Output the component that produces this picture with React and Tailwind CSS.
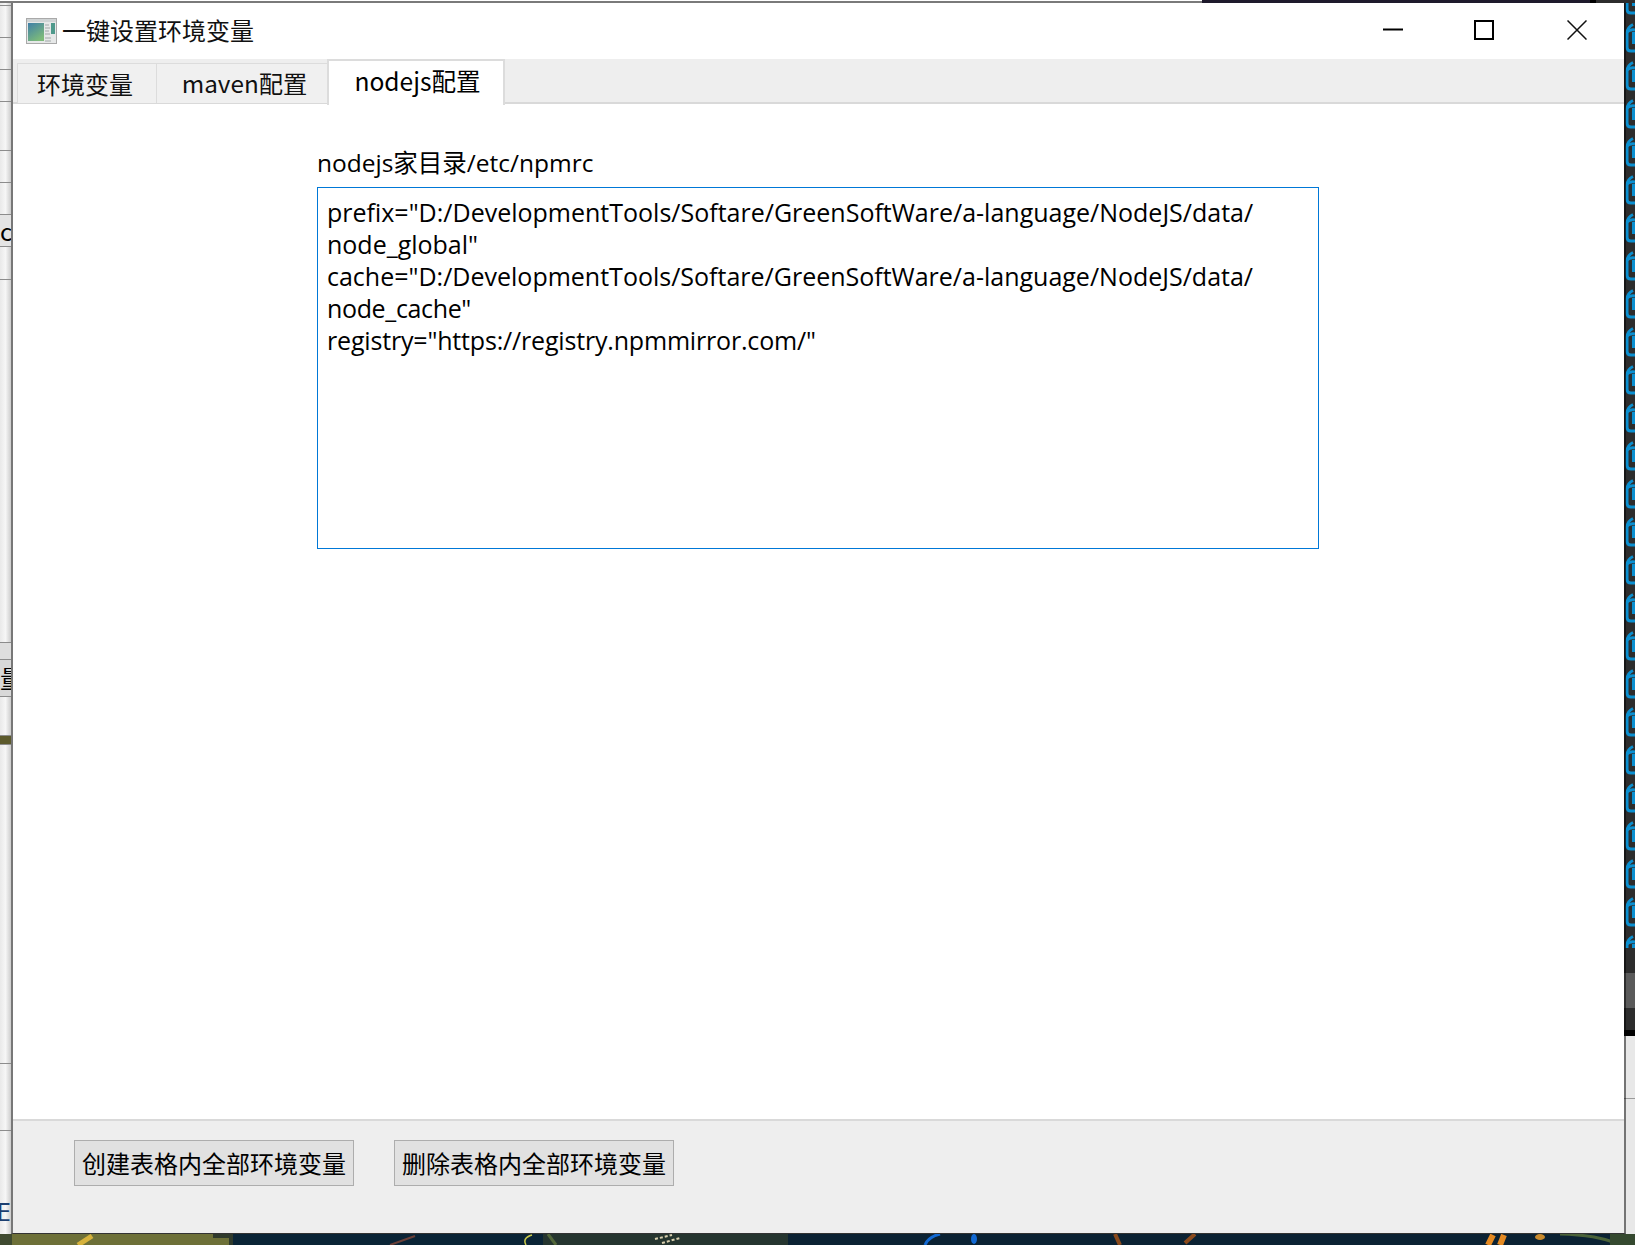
import React from "react";

const cjk = '"Noto Sans CJK SC", sans-serif';
const latin = '"Open Sans", "Noto Sans CJK SC", sans-serif';
const lines = [
  ['prefix="D:/DevelopmentTools/Softare/GreenSoftWare/a-language/NodeJS/data/', ""],
  ['node_global"', ""],
  ['cache="D:/DevelopmentTools/Softare/GreenSoftWare/a-language/NodeJS/data/', ""],
  ['node_cache"', "tracking-[-0.35px]"],
  ['registry="https://registry.npmmirror.com/"', "tracking-[-0.18px]"],
];

// rows of the window peeking out on the left
const leftRows = [
  [3, ""], [32, ""], [32, ""], [32, ""], [49, ""], [32, ""], [32, ""], [32, "bg-[#e4e4e4]", "c"], [33, ""],
  [363, ""], [17, "bg-[#dedede]"], [37, "bg-[#d8d8d8]", "量"], [39, ""], [9, "bg-[#5c5a2c]"], [319, ""], [67, ""],
];

function AppIcon() {
  return (
    <svg width="31" height="26" viewBox="0 0 31 26">
      <defs>
        <linearGradient id="panel" x1="0" y1="0" x2="0.6" y2="1">
          <stop offset="0" stopColor="#3f7fa8" />
          <stop offset="1" stopColor="#7dbb7a" />
        </linearGradient>
      </defs>
      <rect x="0.5" y="0.5" width="30" height="25" fill="#e6e8e8" stroke="#a9a9a9" />
      <rect x="1" y="1" width="29" height="3" fill="#cfd3d4" />
      <rect x="2" y="5" width="16" height="18" fill="url(#panel)" />
      <rect x="25" y="5" width="4" height="11" fill="#4f9a8c" />
      <path d="M19 7h4M19 10h5M19 13h4M19 16h5M19 20h6M19 23h6" stroke="#b9bdbd" strokeWidth="1.5" />
    </svg>
  );
}

function WindowButtons() {
  return (
    <div className="mb-[2px] flex items-center">
      <svg width="20" height="20" viewBox="0 0 20 20" className="mr-[71px]">
        <path d="M0 9.5h20" stroke="#000" strokeWidth="2" />
      </svg>
      <svg width="20" height="20" viewBox="0 0 20 20" className="mr-[73px]">
        <rect x="1" y="1" width="18" height="18" fill="none" stroke="#000" strokeWidth="2" />
      </svg>
      <svg width="20" height="20" viewBox="0 0 20 20">
        <path d="M0.5 0.5l19 19M19.5 0.5l-19 19" stroke="#111" strokeWidth="1.5" />
      </svg>
    </div>
  );
}

function Tab({ label, active, className }) {
  if (active) {
    return (
      <div className={`${className} relative z-10 -mb-[2px] flex h-[46px] items-center justify-center border-x-2 border-t-2 border-[#dcdcdc] bg-white pb-[5px] text-black`}>
        {label}
      </div>
    );
  }
  return (
    <div className={`${className} mt-[4px] flex h-[40px] items-center justify-center border-l border-t border-[#dcdcdc] bg-[#f0f0f0] text-[#111]`}>
      {label}
    </div>
  );
}

function FooterButton({ children }) {
  return (
    <button className="flex h-[46px] w-[280px] items-center justify-center border border-[#adadad] bg-[#e1e1e1] text-[24px] text-black">
      {children}
    </button>
  );
}

function RightGlyphs() {
  return (
    <svg width="11" height="945" className="block">
      <defs>
        <pattern id="glyph" width="11" height="38" patternUnits="userSpaceOnUse" y="20">
          <rect width="11" height="38" fill="#2d2d2d" />
          <path d="M9 1.5Q3.5 4 3 10V24Q3 28 7 28H11" fill="none" stroke="#0a8fd0" strokeWidth="3" />
          <path d="M3 9Q6 6 11 7" fill="none" stroke="#0a8fd0" strokeWidth="3" />
          <path d="M8 9H11V21H8Z" fill="#0a8fd0" />
          <rect x="5" y="13" width="3" height="5" fill="#24303a" />
        </pattern>
      </defs>
      <rect width="11" height="945" fill="url(#glyph)" />
    </svg>
  );
}

function Wallpaper() {
  return (
    <svg width="1635" height="11" className="block">
      <rect width="1635" height="11" fill="#0b2233" />
      <rect width="233" height="11" fill="#6d7038" />
      <rect x="0" width="12" height="11" fill="#3f4a30" />
      <rect x="229" width="4" height="11" fill="#2f3a2c" />
      <path d="M213 4h16v-4h-16z" fill="#2f3a2c" />
      <rect x="233" width="310" height="11" fill="#0a2436" />
      <rect x="543" width="245" height="11" fill="#25352f" />
      <path d="M78 11L92 2" stroke="#d6b23c" strokeWidth="5" />
      <path d="M390 11L415 2" stroke="#6b4038" strokeWidth="2" />
      <path d="M526 11Q522 4 532 1" stroke="#c9c94a" strokeWidth="1.5" fill="none" />
      <path d="M548 0L556 11" stroke="#51663a" strokeWidth="3" />
      <path d="M655 5L672 1M662 9L680 4" stroke="#d8cfae" strokeWidth="2" strokeDasharray="3 2" />
      <path d="M925 11Q928 3 940 0" stroke="#1269d3" strokeWidth="3" fill="none" />
      <ellipse cx="974" cy="5" rx="3" ry="5" fill="#1269d3" />
      <path d="M1115 0L1120 11M1195 0L1185 9" stroke="#8a4a1c" strokeWidth="4" fill="none" />
      <path d="M1488 11L1493 1M1500 11L1504 1" stroke="#e58a22" strokeWidth="6" />
      <ellipse cx="1540" cy="3" rx="5" ry="3" fill="#c98a2c" />
      <path d="M1560 0Q1600 1 1620 11" stroke="#4a6238" strokeWidth="3" fill="none" />
      <rect x="1610" width="25" height="11" fill="#35492f" />
    </svg>
  );
}

export default function App() {
  return (
    <div className="relative h-[1245px] w-[1635px] overflow-hidden bg-[#0b2233]" style={{ fontFamily: cjk }}>
      {/* desktop behind the window */}
      <div className="flex h-[3px]">
        <div className="w-[1202px] border-t border-white bg-[#7a7a7a]" />
        <div className="w-[388px] bg-[#1e1a2c]" />
        <div className="w-[6px] bg-black" />
        <div className="flex-1 bg-[#2d2d2d]" />
      </div>
      <div className="flex h-[1231px]">
        <div className="w-[11px] overflow-hidden bg-gradient-to-r from-[#e9e9e9] via-[#f6f6f6] to-[#cdcdcd]">
          {leftRows.map(([h, cls, txt], i) => (
            <div
              key={i}
              style={{ height: h }}
              className={`flex items-center border-b border-[#8c8c8c] text-[24px] leading-none text-black ${cls}`}
            >
              {txt}
            </div>
          ))}
          <div className="flex h-[103px] items-end justify-end whitespace-nowrap pb-[10px] text-[26px] leading-none text-[#1c3f70]" style={{ fontFamily: latin }}>
            KE
          </div>
        </div>
        <div className="w-[1613px]" />
        <div className="flex w-[11px] flex-col bg-[#2d2d2d]">
          <RightGlyphs />
          <div className="mt-[25px] h-[35px] bg-[#5a5a5a]" />
          <div className="mt-[22px] h-[6px] bg-black" />
          <div className="h-[63px] border-b border-[#9a9a9a] bg-[#e8e8e8]" />
          <div className="flex-1 bg-[#e8e8e8]" />
        </div>
      </div>
      <Wallpaper />

      {/* the application window */}
      <div className="absolute left-[11px] top-[3px] flex h-[1231px] w-[1615px] flex-col border-x-2 border-b border-l-[#777777] border-r-black/50 border-b-[#333333] bg-clip-padding">
        <div className="flex h-[56px] items-center justify-between bg-white pl-[13px] pr-[37px]">
          <div className="flex items-center">
            <AppIcon />
            <span className="mb-[3px] ml-[5px] text-[24px] text-[#111]">一键设置环境变量</span>
          </div>
          <WindowButtons />
        </div>

        <div className="flex h-[45px] border-b-2 border-[#d9d9d9] bg-[#eeeeee] pl-[4px]">
          <Tab label="环境变量" className="w-[139px] pr-[4px] text-[24px]" />
          <Tab label="maven配置" className="w-[171px] pl-[5px] text-[24.3px]" />
          <Tab label="nodejs配置" className="w-[178px] pl-[3px] text-[24.6px]" active />
        </div>

        <div className="flex-1 bg-white pl-[304px] pt-[41px]">
          <div className="h-[42px] text-[24.5px] leading-[36px] text-black" style={{ fontFamily: latin }}>
            nodejs家目录/etc/npmrc
          </div>
          <div
            className="h-[362px] w-[1002px] border border-[#0078d7] px-[9px] pt-[8px] text-[25px] leading-[32px] text-black"
            style={{ fontFamily: latin }}
          >
            {lines.map(([line, cls]) => (
              <div key={line} className={`whitespace-pre ${cls}`}>{line}</div>
            ))}
          </div>
        </div>

        <div className="flex h-[114px] gap-[40px] border-t-2 border-[#d9d9d9] bg-[#eeeeee] pl-[61px] pt-[19px]">
          <FooterButton>创建表格内全部环境变量</FooterButton>
          <FooterButton>删除表格内全部环境变量</FooterButton>
        </div>
      </div>
    </div>
  );
}
